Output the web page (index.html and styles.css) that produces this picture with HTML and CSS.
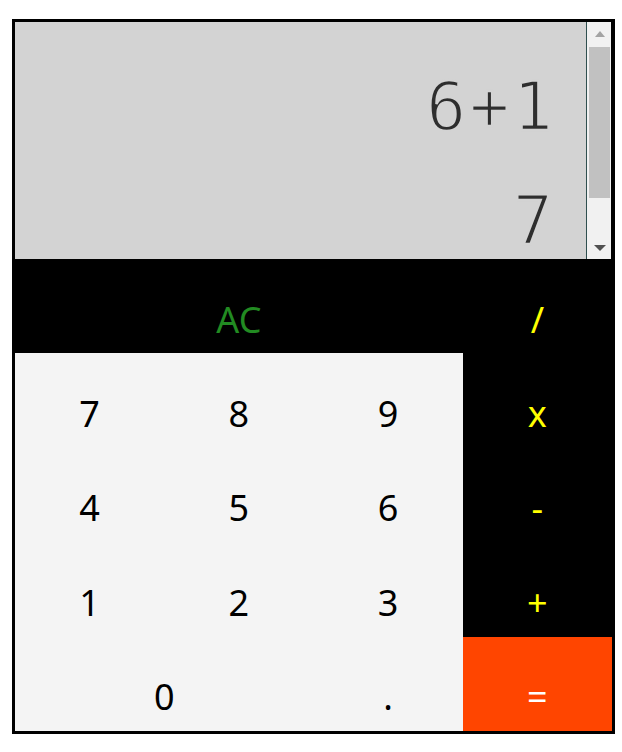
FILE: index.html
```html
<!DOCTYPE html>
<html>
<head>
<meta charset="utf-8">
<link rel="stylesheet" href="styles.css">
</head>
<body>
<div class="calc">
  <div class="display">
    <div class="screen">
      <div class="line">6+1</div>
      <div class="line">7</div>
    </div>
    <div class="scrollbar">
      <div class="sb-btn"><span class="arrow-up"></span></div>
      <div class="sb-track"><div class="sb-thumb"></div></div>
      <div class="sb-btn sb-btn-down"><span class="arrow-down"></span></div>
    </div>
  </div>
  <div class="keys">
    <div class="key dark clear span3">AC</div>
    <div class="key dark op">/</div>
    <div class="key light">7</div>
    <div class="key light">8</div>
    <div class="key light">9</div>
    <div class="key dark op">x</div>
    <div class="key light">4</div>
    <div class="key light">5</div>
    <div class="key light">6</div>
    <div class="key dark op">-</div>
    <div class="key light">1</div>
    <div class="key light">2</div>
    <div class="key light">3</div>
    <div class="key dark op">+</div>
    <div class="key light span2">0</div>
    <div class="key light">.</div>
    <div class="key equals">=</div>
  </div>
</div>
</body>
</html>
```

FILE: styles.css
```css
html, body {
  margin: 0;
  padding: 0;
  background: #ffffff;
}

.calc {
  margin: 19px 0 0 12px;
  width: 597px;
  border: 3px solid #000;
  background: #000;
}

.display {
  display: flex;
  height: 237px;
}

.screen {
  width: 572px;
  background: #d3d3d3;
  border-right: 1px solid #2f4f4f;
  overflow: hidden;
  box-sizing: border-box;
  padding: 28px 30px 0 0;
  text-align: right;
  font-family: "DejaVu Sans Mono", "Liberation Mono", monospace;
  font-size: 67px;
  letter-spacing: 3px;
  line-height: 114px;
  color: #2e2e2e;
  -webkit-text-stroke: 2.4px #d3d3d3;
}

.line {
  white-space: nowrap;
}

.scrollbar {
  width: 24px;
  background: #f1f1f1;
  display: flex;
  flex-direction: column;
}

.sb-btn {
  height: 24px;
  display: flex;
  align-items: center;
  justify-content: center;
}

.sb-btn-down {
  height: 22px;
}

.arrow-up {
  width: 0;
  height: 0;
  border-left: 5.5px solid transparent;
  border-right: 5.5px solid transparent;
  border-bottom: 6px solid #a3a3a3;
  margin-left: 1px;
}

.arrow-down {
  width: 0;
  height: 0;
  border-left: 6px solid transparent;
  border-right: 6px solid transparent;
  border-top: 6px solid #505050;
  margin-left: 1px;
}

.sb-track {
  flex: 1;
  padding-top: 1px;
}

.sb-thumb {
  height: 151px;
  margin: 0 1px 0 2px;
  background: #c1c1c1;
}

.keys {
  display: grid;
  grid-template-columns: repeat(4, 1fr);
  grid-template-rows: repeat(5, 1fr);
  height: 472px;
}

.key {
  display: flex;
  align-items: center;
  justify-content: center;
  padding-top: 26px;
  box-sizing: border-box;
  font-family: "Noto Sans", "Open Sans", sans-serif;
  font-size: 36px;
}

.span3 {
  grid-column: span 3;
}

.span2 {
  grid-column: span 2;
}

.dark {
  background: #000;
}

.clear {
  color: #228b22;
}

.op {
  color: #ffff00;
}

.light {
  background: #f4f4f4;
  color: #000;
}

.equals {
  background: #ff4500;
  color: #ffffff;
}
```
